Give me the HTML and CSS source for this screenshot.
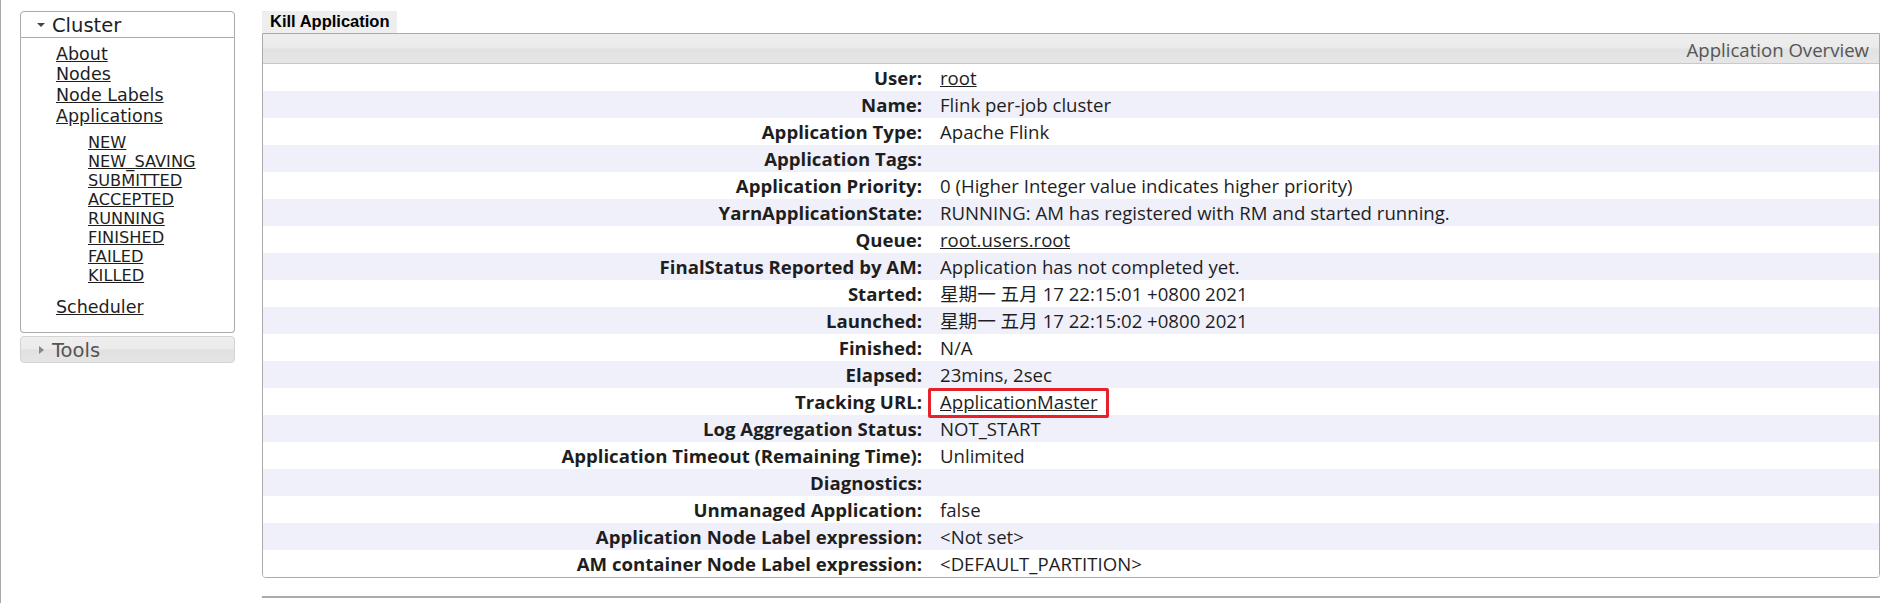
FILE: index.html
```html
<!DOCTYPE html>
<html lang="en">
<head>
<meta charset="utf-8">
<title>Application Overview</title>
<link rel="stylesheet" href="styles.css">
</head>
<body>
<div class="page">
  <aside class="nav">
    <div class="acc-head active"><span class="tri-s"></span><span>Cluster</span></div>
    <div class="acc-body">
      <ul class="links">
        <li><a href="#">About</a></li>
        <li><a href="#">Nodes</a></li>
        <li><a href="#">Node Labels</a></li>
        <li><a href="#">Applications</a>
          <ul class="sub">
            <li><a href="#">NEW</a></li>
            <li><a href="#">NEW_SAVING</a></li>
            <li><a href="#">SUBMITTED</a></li>
            <li><a href="#">ACCEPTED</a></li>
            <li><a href="#">RUNNING</a></li>
            <li><a href="#">FINISHED</a></li>
            <li><a href="#">FAILED</a></li>
            <li><a href="#">KILLED</a></li>
          </ul>
        </li>
        <li class="sched"><a href="#">Scheduler</a></li>
      </ul>
    </div>
    <div class="acc-head closed"><span class="tri-e"></span><span>Tools</span></div>
  </aside>
  <main class="content">
    <div class="tabs"><div class="tab">Kill Application</div></div>
    <div class="panel">
      <div class="panel-head">Application Overview</div>
      <div class="info">
        <div class="row"><div class="k">User:</div><div class="v"><a href="#">root</a></div></div>
        <div class="row"><div class="k">Name:</div><div class="v">Flink per-job cluster</div></div>
        <div class="row"><div class="k">Application Type:</div><div class="v">Apache Flink</div></div>
        <div class="row"><div class="k">Application Tags:</div><div class="v"></div></div>
        <div class="row"><div class="k">Application Priority:</div><div class="v">0 (Higher Integer value indicates higher priority)</div></div>
        <div class="row"><div class="k">YarnApplicationState:</div><div class="v">RUNNING: AM has registered with RM and started running.</div></div>
        <div class="row"><div class="k">Queue:</div><div class="v"><a href="#">root.users.root</a></div></div>
        <div class="row"><div class="k">FinalStatus Reported by AM:</div><div class="v">Application has not completed yet.</div></div>
        <div class="row"><div class="k">Started:</div><div class="v">星期一 五月 17 22:15:01 +0800 2021</div></div>
        <div class="row"><div class="k">Launched:</div><div class="v">星期一 五月 17 22:15:02 +0800 2021</div></div>
        <div class="row"><div class="k">Finished:</div><div class="v">N/A</div></div>
        <div class="row"><div class="k">Elapsed:</div><div class="v">23mins, 2sec</div></div>
        <div class="row"><div class="k">Tracking URL:</div><div class="v"><span class="mark"><a href="#">ApplicationMaster</a></span></div></div>
        <div class="row"><div class="k">Log Aggregation Status:</div><div class="v">NOT_START</div></div>
        <div class="row"><div class="k">Application Timeout (Remaining Time):</div><div class="v">Unlimited</div></div>
        <div class="row"><div class="k">Diagnostics:</div><div class="v"></div></div>
        <div class="row"><div class="k">Unmanaged Application:</div><div class="v">false</div></div>
        <div class="row"><div class="k">Application Node Label expression:</div><div class="v">&lt;Not set&gt;</div></div>
        <div class="row"><div class="k">AM container Node Label expression:</div><div class="v">&lt;DEFAULT_PARTITION&gt;</div></div>
      </div>
    </div>
    <div class="foot"></div>
  </main>
</div>
</body>
</html>
```

FILE: styles.css
```css
html, body {
  margin: 0;
  padding: 0;
  background: #fff;
}

body {
  font-family: "Open Sans", "Noto Sans CJK SC", sans-serif;
  color: #1e1e1e;
}

a {
  color: #1e1e1e;
  text-decoration: underline;
}

.page {
  display: flex;
  align-items: flex-start;
  min-height: 603px;
  box-sizing: border-box;
  border-left: 1px solid #a8a8a8;
}

/* ---------- left navigation ---------- */
.nav {
  flex: none;
  width: 215px;
  margin-left: 19px;
  padding-top: 11px;
  font-family: "DejaVu Sans", Verdana, sans-serif;
}

.acc-head {
  display: flex;
  align-items: flex-start;
  height: 23px;
  line-height: 23px;
  padding-top: 2px;
  border: 1px solid #aaa;
  font-size: 19.5px;
}

.acc-head.active {
  background: #fff;
  color: #212121;
  border-radius: 4px 4px 0 0;
  padding-left: 16px;
}

.acc-head.closed {
  margin-top: 3px;
  border-color: #d3d3d3;
  border-radius: 4px;
  color: #555;
  padding-left: 18px;
  background: linear-gradient(to bottom, #efefef 0%, #ebebeb 46%, #e1e1e1 52%, #e5e5e5 100%);
}

.tri-s {
  flex: none;
  width: 0;
  height: 0;
  border-left: 4px solid transparent;
  border-right: 4px solid transparent;
  border-top: 4px solid #454545;
  margin-top: 9px;
  margin-right: 7px;
}

.tri-e {
  flex: none;
  width: 0;
  height: 0;
  border-top: 4.5px solid transparent;
  border-bottom: 4.5px solid transparent;
  border-left: 5px solid #888;
  margin-top: 7px;
  margin-right: 8px;
}

.acc-body {
  border: 1px solid #aaa;
  border-top: 0;
  border-radius: 0 0 4px 4px;
  padding: 5.5px 0 14px;
  background: #fff;
}

.links {
  list-style: none;
  margin: 0;
  padding: 0 0 0 35px;
  font-size: 17.5px;
  line-height: 20.8px;
}

.links li {
  margin: 0;
  padding: 0;
}

.sub {
  list-style: none;
  margin: 6.4px 0 0;
  padding: 0 0 0 32px;
  font-size: 16.2px;
  line-height: 19px;
}

.links .sched {
  margin-top: 12px;
}

/* ---------- main content ---------- */
.content {
  flex: none;
  width: 1618px;
  margin-left: 27px;
  padding-top: 11px;
}

.tabs {
  display: flex;
}

.tab {
  background: #eeeeee;
  color: #000;
  font-family: "Liberation Sans", Arial, sans-serif;
  font-weight: 700;
  font-size: 16.5px;
  line-height: 20px;
  padding: 0 8px 2px 8px;
}

.panel {
  border: 1px solid #aaa;
  border-radius: 0 0 4px 4px;
  overflow: hidden;
  font-size: 18.6px;
}

.panel-head {
  height: 27px;
  line-height: 27px;
  padding: 2px 10px 0 0;
  text-align: right;
  color: #555;
  border-bottom: 1px solid #c9c9c9;
  background: linear-gradient(to bottom, #eeeeee 0%, #ebebeb 46%, #e2e2e2 54%, #e6e6e6 100%);
}

.row {
  display: grid;
  grid-template-columns: 668px 1fr;
  height: 27px;
  line-height: 27px;
  background: #fff;
}

.row:nth-child(even) {
  background: #f0f0fa;
}

.k {
  text-align: right;
  padding-right: 9px;
  font-weight: 700;
  white-space: nowrap;
}

.v {
  padding-left: 9px;
  white-space: nowrap;
}

.mark {
  position: relative;
  display: inline-block;
  line-height: 27px;
}

.mark::after {
  content: "";
  position: absolute;
  left: -12px;
  right: -11px;
  top: 0;
  bottom: -3px;
  border: 3px solid #e5222c;
  border-radius: 2px;
  pointer-events: none;
}

.foot {
  margin-top: 18px;
  border-top: 2px solid #aaa;
}
```
